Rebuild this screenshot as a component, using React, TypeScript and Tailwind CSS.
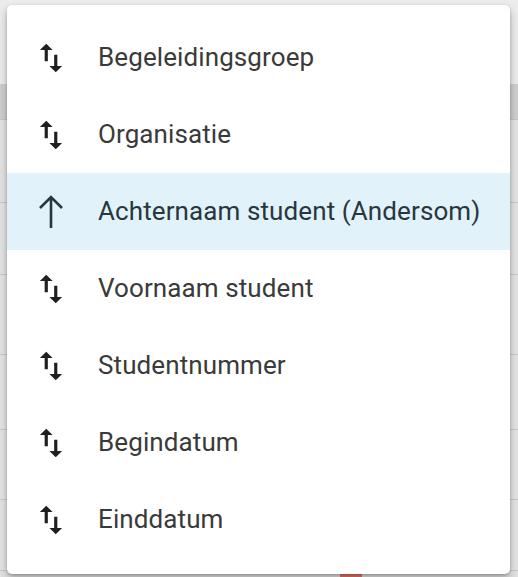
import { useState } from "react";

const options = [
  "Begeleidingsgroep",
  "Organisatie",
  "Achternaam student (Andersom)",
  "Voornaam student",
  "Studentnummer",
  "Begindatum",
  "Einddatum",
];

function SwapVert() {
  return (
    <svg width="38" height="38" viewBox="0 0 24 24" fill="currentColor" aria-hidden="true">
      <path d="M16 17.01V10h-2v7.01h-3L15 21l4-3.99h-3zM9 3L5 6.99h3V14h2V6.99h3L9 3z" />
    </svg>
  );
}

function ArrowUp() {
  return (
    <svg width="38" height="38" viewBox="0 0 38 38" fill="none" stroke="currentColor" strokeWidth="2.6" aria-hidden="true">
      <path d="M19 35V4M8 15L19 4l11 11" />
    </svg>
  );
}

export default function App() {
  const [active, setActive] = useState(2);

  return (
    <div className="relative h-[577px] w-[518px] overflow-hidden bg-[#e2e2e2] font-['Roboto',sans-serif]">
      {/* page behind the menu */}
      <div className="flex flex-col">
        <div className="h-[84px] bg-[#ececec]" />
        <div className="h-[36px] border-b border-[#c4c4c4] bg-[#cfcfcf]" />
        {[83, 72, 80, 75, 70, 71].map((h, i) => (
          <div key={i} style={{ height: h }} className="border-b border-[#c9c9c9] bg-[#e4e4e4]" />
        ))}
      </div>
      <div className="absolute bottom-0 left-[340px] h-[3px] w-[22px] bg-[#e57368]" />

      <div className="absolute left-[7px] top-[5px] h-[569px] w-[503px] rounded-[5px] bg-white pt-[14px] shadow-[0_5px_10px_rgba(0,0,0,0.25),0_1px_3px_rgba(0,0,0,0.2)]">
        {options.map((label, index) => {
          const isActive = index === active;
          return (
            <button
              key={label}
              type="button"
              onClick={() => setActive(index)}
              className={`flex h-[77px] w-full items-center text-left ${isActive ? "bg-[#e1f2fb] text-[#2a363d]" : "text-[#3a3a3a]"}`}
            >
              <span className={`ml-[25px] grid w-[38px] place-items-center ${isActive ? "" : "text-[#1f1f1f]"}`}>
                {isActive ? <ArrowUp /> : <SwapVert />}
              </span>
              <span className="ml-[28px] text-[26px] tracking-[0.1px]">{label}</span>
            </button>
          );
        })}
      </div>
    </div>
  );
}
